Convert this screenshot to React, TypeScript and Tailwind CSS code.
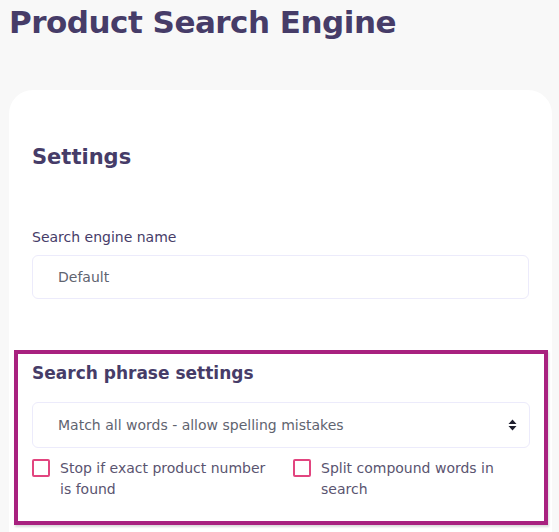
import React, { useState } from 'react';

const font = { fontFamily: '"DejaVu Sans", "Noto Sans", sans-serif' };

export default function App() {
  const [name, setName] = useState('Default');
  const [mode, setMode] = useState('all-fuzzy');
  const [stopExact, setStopExact] = useState(false);
  const [splitWords, setSplitWords] = useState(false);

  return (
    <div className="h-screen bg-[#f8f8f8] text-[#463c68] overflow-hidden" style={font}>
      <h1 className="pl-[9px] pt-[2px] text-[31px] leading-[40px] font-bold tracking-[-0.5px]">Product Search Engine</h1>

      <div className="ml-[9px] mr-[7px] mt-[48px] bg-white rounded-t-[24px] pt-[53px] pb-[12px]">
        <h2 className="px-[23px] text-[21px] leading-[28px] font-bold">Settings</h2>

        <div className="px-[23px] mt-[56px]">
          <label className="block text-[14px] leading-[20px] font-medium">Search engine name</label>
          <input
            value={name}
            onChange={(e) => setName(e.target.value)}
            className="mt-[8px] w-full h-[44px] px-[25px] rounded-[6px] border border-[#ecebfb] text-[14px] text-[#5f6470] outline-none"
          />
        </div>

        <div className="ml-[5px] mr-[4px] mt-[51px] border-4 border-[#a8217f] px-[14px] pt-[6px] pb-[21px] shadow-[1px_2px_2px_rgba(0,0,0,0.15)]">
          <h3 className="text-[17px] leading-[26px] font-bold">Search phrase settings</h3>
          <div className="relative mt-[16px]">
            <select
              value={mode}
              onChange={(e) => setMode(e.target.value)}
              className="appearance-none w-full h-[46px] pl-[25px] pr-10 rounded-[6px] border border-[#ecebfb] bg-white text-[14px] text-[#5f6470] outline-none"
            >
              <option value="all-fuzzy">Match all words - allow spelling mistakes</option>
              <option value="all">Match all words</option>
              <option value="any">Match any word</option>
            </select>
            <svg className="absolute right-[13px] top-[17px] pointer-events-none" width="9" height="12" viewBox="0 0 9 12">
              <path d="M4.5 0.5 L8.5 5 H0.5 Z M0.5 7 H8.5 L4.5 11.5 Z" fill="#1f1f2e" />
            </svg>
          </div>
          <div className="mt-[10px] grid grid-cols-2 gap-[24px]">
            <label className="flex items-start gap-[10px] cursor-pointer">
              <input type="checkbox" checked={stopExact} onChange={(e) => setStopExact(e.target.checked)} className="sr-only" />
              <span className="mt-[1px] w-[18px] h-[18px] shrink-0 border-2 border-[#e2457f] rounded-[2px] bg-white" />
              <span className="text-[14px] leading-[21px] text-[#5a5470]">Stop if exact product number is found</span>
            </label>
            <label className="flex items-start gap-[10px] cursor-pointer">
              <input type="checkbox" checked={splitWords} onChange={(e) => setSplitWords(e.target.checked)} className="sr-only" />
              <span className="mt-[1px] w-[18px] h-[18px] shrink-0 border-2 border-[#e2457f] rounded-[2px] bg-white" />
              <span className="text-[14px] leading-[21px] text-[#5a5470]">Split compound words in search</span>
            </label>
          </div>
        </div>
      </div>
    </div>
  );
}
